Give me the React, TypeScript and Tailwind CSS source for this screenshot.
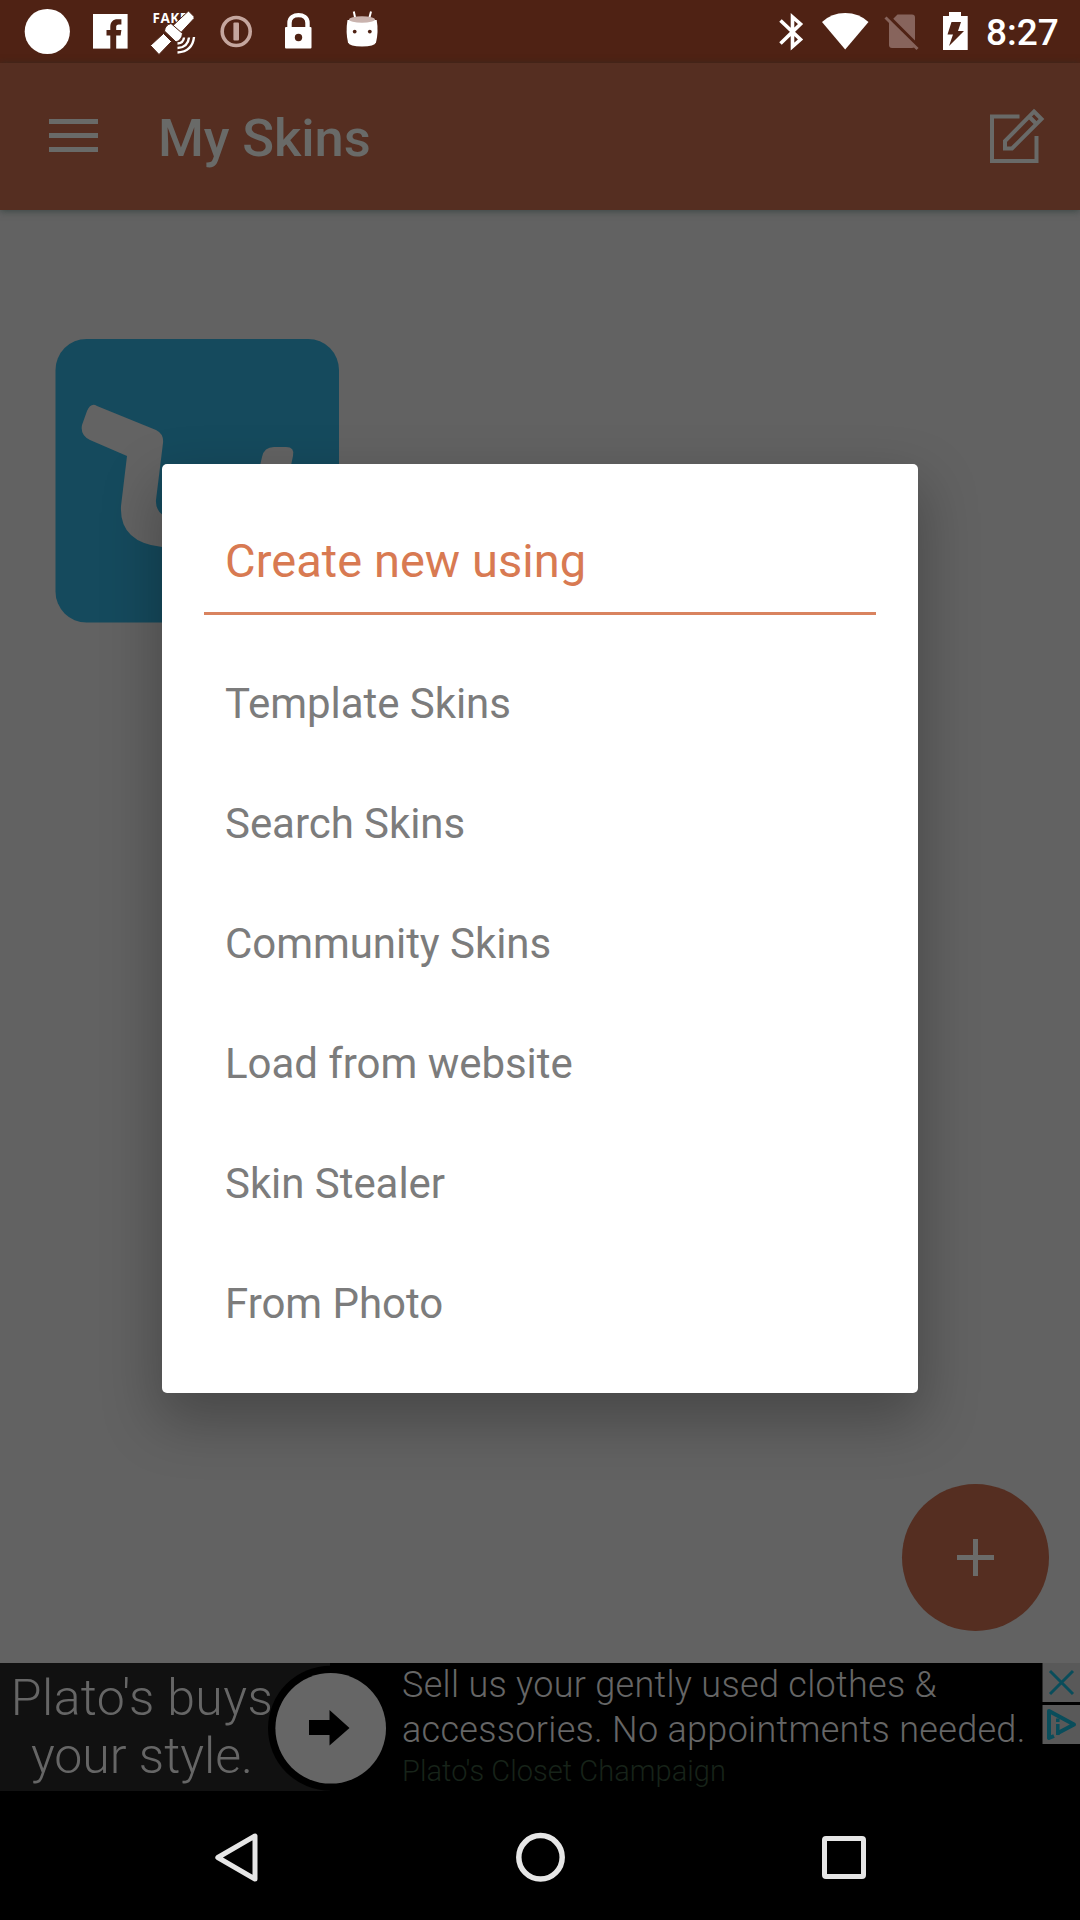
import React from "react";

const options = [
  "Template Skins",
  "Search Skins",
  "Community Skins",
  "Load from website",
  "Skin Stealer",
  "From Photo",
];

function StatusBar() {
  return (
    <div className="flex h-[63px] shrink-0 items-center justify-between bg-[#4f2214] text-white">
      <div className="flex">
        <svg width="80" height="63" viewBox="0 0 80 63" fill="#fff">
          <circle cx="47.3" cy="31.5" r="22.6" />
        </svg>
        <svg width="60" height="63" viewBox="80 0 60 63">
          <rect x="93" y="14" width="34.6" height="34.6" fill="#fff" />
          <path d="M110.3 49V35.5h-3.8v-5.5h3.8v-3.2c0-5 2.9-7.5 7.2-7.5h3.9v5.2h-2.6c-2 0-2.6.9-2.6 2.5v3h5.2l-.8 5.5h-4.4V49z" fill="#4f2214" />
        </svg>
        <svg width="66" height="63" viewBox="140 0 66 63">
          <text x="152.5" y="22.8" fontFamily="Open Sans, sans-serif" fontWeight="700" fontSize="13.5" fill="#fff" letterSpacing="0.5">FAKE</text>
          <g fill="#fff" stroke="#4f2214" strokeWidth="1" strokeLinejoin="round">
            <path d="M173 25.500 L188.500 11 L194 16.500 L194 18.500 L180.500 33z" />
            <path d="M150.500 45.500 L163.500 33.500 L171.500 41.500 L159 54.500z" />
            <path d="M164.500 31 Q165 25 171 23.500 L182.500 33.500 Q182 40 176 42z" />
          </g>
          <g fill="none" stroke="#fff" strokeWidth="2.4">
            <path d="M177.500 43.500q6-.5 6.500-6" />
            <path d="M177.500 48q10.500-.5 11.500-10.500" />
            <path d="M177.500 52.500q15-1 16.500-15.500" />
          </g>
        </svg>
        <svg width="60" height="63" viewBox="206 0 60 63">
          <circle cx="236.2" cy="31.5" r="14" fill="none" stroke="#c5a69e" strokeWidth="3.6" />
          <rect x="233.4" y="22.5" width="5.6" height="18" rx="1" fill="#c5a69e" />
        </svg>
        <svg width="64" height="63" viewBox="266 0 64 63">
          <path d="M289.5 28v-5c0-10.5 18-10.5 18 0v5" fill="none" stroke="#fff" strokeWidth="4.4" />
          <rect x="285" y="27" width="26.5" height="21.6" rx="1" fill="#fff" />
          <circle cx="298.5" cy="37.5" r="3.7" fill="#4f2214" />
        </svg>
        <svg width="64" height="63" viewBox="330 0 64 63">
          <path d="M353.800 11.500l1.500 7M371 11.500l-1.800 7" stroke="#fff" strokeWidth="2" />
          <path d="M347.500 20h29.200q2 12-.7 22.500-1.500 4-14 4t-14-4q-2.500-10.500-.5-22.500z" fill="#fff" />
          <ellipse cx="362" cy="19.500" rx="13" ry="3.200" fill="#c9b3ae" />
          <circle cx="354.700" cy="31.600" r="1.900" fill="#4f2214" />
          <circle cx="369.800" cy="31.600" r="1.900" fill="#4f2214" />
        </svg>
      </div>
      <div className="flex items-center">
        <svg width="42" height="63" viewBox="770 0 42 63" fill="none" stroke="#fff" strokeWidth="3.6">
          <path d="M780.500 20.500 L800.500 39.500 L792.500 46.500 V17 L800.500 24 L780.500 43.500" />
        </svg>
        <svg width="66" height="63" viewBox="812 0 66 63">
          <path d="M822 22q9.500-9 23.200-9t23.300 9L845.200 49.500z" fill="#fff" />
        </svg>
        <svg width="52" height="63" viewBox="878 0 52 63">
          <path d="M897.500 14.500h14.500q3 0 3 3v27.500q0 3-3 3h-20q-3 0-3-3V23z" fill="#87645c" />
          <path d="M889 18 L918 47" stroke="#4f2214" strokeWidth="5" />
          <path d="M885.500 17.500 L917.500 49" stroke="#87645c" strokeWidth="3" />
        </svg>
        <svg width="56" height="63" viewBox="930 0 56 63">
          <path d="M943 16h6v-4h12v4h6.700v34H943z" fill="#fff" />
          <path d="M951.500 22h9.500l-3 9h6L949 46l4-11.500h-5.500z" fill="#4f2214" />
        </svg>
        <span className="w-[94px] pt-[2px] text-[37px] leading-[61px] font-medium">8:27</span>
      </div>
    </div>
  );
}

function Header() {
  return (
    <header className="relative z-10 flex h-[147px] shrink-0 items-center bg-[#552e21] text-[#696a68] shadow-[0_1px_7px_rgba(30,50,45,0.6)]">
      <div className="mb-[2px] ml-[49px] flex w-[49px] flex-col gap-[9px]">
        <div className="h-[5px] bg-current" />
        <div className="h-[5px] bg-current" />
        <div className="h-[5px] bg-current" />
      </div>
      <h1 className="ml-[60px] flex-1 pt-[2px] text-[52.5px] leading-[62px] font-medium tracking-[-0.1px]">My Skins</h1>
      <svg className="mr-[34px] mb-[2px]" width="58" height="58" viewBox="988 107 58 58" fill="none" stroke="currentColor" strokeWidth="4">
        <path d="M1019.500 116.500H992V161h44.500V136" />
        <path d="M1034 111.500L1041.500 119 1012 148.500H1005V141z" />
        <path d="M1029 116.500l7.500 7.500" />
      </svg>
    </header>
  );
}

function SkinTile() {
  return (
    <svg className="mt-[129px] ml-[55px]" width="284" height="284" viewBox="55 339 284 284">
      <rect x="55.5" y="339" width="283.5" height="283.5" rx="31" fill="#154a5d" />
      <path
        d="M97 406 L156 430 Q164 434 163 443 L156 500 Q155 516 175 520 L190 520 L190 547 L162 547 Q119 542 121 506 L127 456 L90 440 Q80 435 82 425 L87 411 Q91 402 97 406z"
        fill="#636363"
      />
      <path d="M259 470l3-13q2-10 12-10h12q9 0 7 9l-3 14z" fill="#636363" />
    </svg>
  );
}

function AdBanner() {
  return (
    <div className="relative flex h-[130px] shrink-0 bg-black font-light text-[#666]">
      <div className="h-[128px] w-[330px] bg-[#111]">
        <p className="w-[284px] pt-[6px] text-center text-[50px] leading-[58px] whitespace-nowrap">
          <span className="tracking-[0.4px]">Plato's buys</span>
          <br />
          your style.
        </p>
      </div>
      <svg className="mt-[2px] -ml-[62px]" width="134" height="128" viewBox="268 1665 134 128">
        <rect x="330" y="1663" width="72" height="130" fill="#000" />
        <circle cx="330.5" cy="1728.3" r="62.5" fill="#000" />
        <circle cx="330.7" cy="1728.3" r="55.3" fill="#666" />
        <path d="M309 1720h20.500v-10L349.500 1728l-20 17.500v-10.500H309z" fill="#000" />
      </svg>
      <div className="flex-1 whitespace-nowrap">
        <p className="text-[36px] leading-[44.5px] tracking-[0.3px]">
          Sell us your gently used clothes &amp;
          <br />
          accessories. No appointments needed.
        </p>
        <p className="pt-[2px] text-[29px] leading-[35px] tracking-[0.05px] text-[#172319]">Plato's Closet Champaign</p>
      </div>
      <div className="absolute top-0 right-0 flex flex-col gap-[3px]">
        <svg width="38" height="39" viewBox="0 0 38 39">
          <path d="M.5 0H38v39H.5z" fill="#595959" />
          <path d="M8 8l23 23M31 8L8 31" stroke="#094d5b" strokeWidth="3" />
        </svg>
        <svg width="38" height="39" viewBox="0 0 38 39" fill="none" stroke="#094d5b" strokeWidth="4">
          <path d="M.5 0H38v39H.5z" fill="#595959" stroke="none" />
          <path d="M12 31l-5 2V6l25 13.500-17 9" strokeLinejoin="round" />
          <path d="M15.800 13.500v3.500M15.800 19V30" strokeWidth="3.500" />
        </svg>
      </div>
    </div>
  );
}

function NavBar() {
  return (
    <nav className="flex h-[127px] shrink-0 items-center justify-between bg-black pr-[211px] pl-[212px]">
      <svg width="50" height="54" viewBox="212 1830 50 54" fill="none" stroke="#e6e6e6" strokeWidth="5" strokeLinejoin="round">
        <path d="M255 1836v43L217.800 1857.500z" />
      </svg>
      <svg width="54" height="54" viewBox="513.5 1830 54 54" fill="none" stroke="#e6e6e6" strokeWidth="5.5">
        <circle cx="540" cy="1857.300" r="21.700" />
      </svg>
      <svg width="50" height="54" viewBox="819 1830 50 54" fill="none" stroke="#e6e6e6" strokeWidth="5">
        <rect x="824.500" y="1838.500" width="39" height="38" rx="1.500" />
      </svg>
    </nav>
  );
}

function CreateDialog() {
  return (
    <div className="absolute top-[464px] left-[162px] z-20 h-[929px] w-[756px] rounded-[5px] bg-white pt-[46px] shadow-[0_24px_56px_4px_rgba(0,0,0,0.27)]">
      <h2 className="mx-[42px] h-[105px] border-b-[3px] border-[#d9835f] pl-[21px] text-[47px] leading-[101px] tracking-[0.05px] text-[#d87a52]">
        Create new using
      </h2>
      <ul className="mt-[29px] pl-[63px] text-[42px] leading-[120px] tracking-[-0.05px] text-[#7c7c7c]">
        {options.map((label) => (
          <li key={label}>{label}</li>
        ))}
      </ul>
    </div>
  );
}

export default function App() {
  return (
    <div className="relative flex h-[1920px] w-[1080px] flex-col overflow-hidden bg-[#626262] font-['Roboto',sans-serif]">
      <StatusBar />
      <Header />
      <main className="relative min-h-0 flex-1">
        <SkinTile />
        <button className="absolute right-[31.5px] bottom-[32px] flex size-[147px] items-center justify-center rounded-full bg-[#552e21]">
          <svg width="37" height="37" viewBox="0 0 37 37" stroke="#6b6b69" strokeWidth="5">
            <path d="M18.5 0v37M0 18.5h37" />
          </svg>
        </button>
      </main>
      <AdBanner />
      <NavBar />
      <CreateDialog />
    </div>
  );
}
